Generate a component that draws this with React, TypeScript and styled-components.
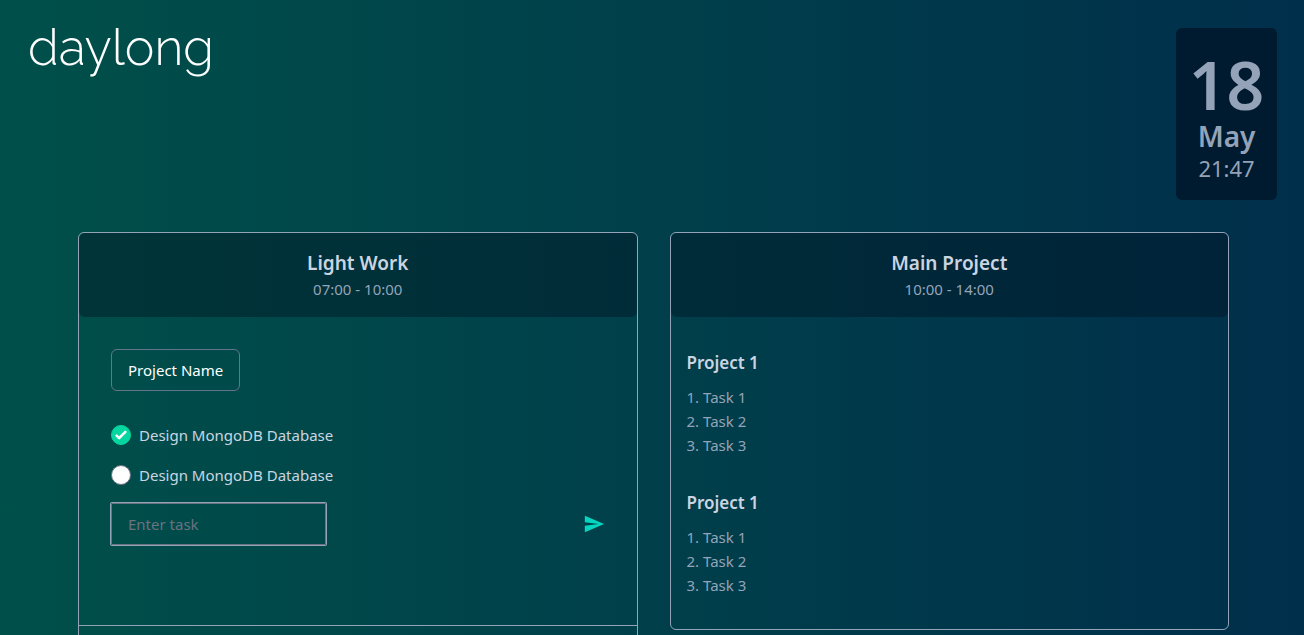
import React from "react";
import styled, { createGlobalStyle } from "styled-components";
import { MdSend } from "react-icons/md";

const GlobalStyle = createGlobalStyle`
  *, *::before, *::after { box-sizing: border-box; }
  body { margin: 0; font-family: "Segoe UI", "Noto Sans", "Open Sans", sans-serif; font-size: 15px; line-height: 24px; }
  h1, h2, h3, p, ol { margin: 0; padding: 0; }
  button, input { font: inherit; }
`;

const Page = styled.div`
  height: 100vh;
  overflow: hidden;
  background: linear-gradient(to right, #00504a, #002f4b);
  color: #94a3b8;
`;

const TopBar = styled.header`
  display: flex;
  justify-content: space-between;
  align-items: flex-start;
  padding: 28px 27px 32px 28px;
`;

const Logo = styled.h1`
  font-family: Raleway, Lato, sans-serif;
  font-weight: 300;
  font-size: 50px;
  line-height: 40px;
  color: #fff;
`;

const DateCard = styled.div`
  min-width: 101px;
  padding: 20px 8px 16px;
  border-radius: 6px;
  background: #001b2f;
  text-align: center;
`;

const Day = styled.div`
  font-size: 66px;
  line-height: 72px;
  font-weight: 600;
`;

const Month = styled.div`
  font-size: 28px;
  line-height: 32px;
  font-weight: 600;
`;

const Clock = styled.time`
  display: block;
  font-size: 22px;
  line-height: 32px;
`;

const Board = styled.main`
  display: grid;
  grid-template-columns: 1fr 1fr;
  align-items: start;
  gap: 32px;
  padding: 0 75px 32px 78px;
`;

const Card = styled.section`
  border: 1px solid #94a3b8;
  border-radius: 6px;
`;

const CardHeader = styled.div`
  padding: 16px;
  border-radius: 6px;
  background: rgba(0, 15, 30, 0.4);
  text-align: center;
`;

const CardTitle = styled.h2`
  font-size: 19px;
  line-height: 28px;
  font-weight: 600;
  color: #cbd5e1;
`;

const TaskPanel = styled.div`
  display: flex;
  flex-direction: column;
  align-items: flex-start;
  gap: 16px;
  padding: 32px 32px 80px;
`;

const NextPanel = styled.div`
  min-height: 96px;
  border-top: 1px solid #94a3b8;
`;

const ProjectButton = styled.button`
  margin-bottom: 16px;
  padding: 8px 16px;
  border: 1px solid #64748b;
  border-radius: 6px;
  background: transparent;
  color: #fff;
`;

const Task = styled.label`
  display: flex;
  align-items: center;
  gap: 8px;
  color: #cbd5e1;
`;

const Check = styled.input`
  appearance: none;
  width: 20px;
  height: 20px;
  margin: 0;
  border: 1px solid #6b7280;
  border-radius: 50%;
  background: #fff;
  &:checked {
    border-color: #06d6a0;
    background: #06d6a0 url("data:image/svg+xml,%3Csvg viewBox='0 0 16 16' fill='white' xmlns='http://www.w3.org/2000/svg'%3E%3Cpath d='M12.207 4.793a1 1 0 010 1.414l-5 5a1 1 0 01-1.414 0l-2-2a1 1 0 011.414-1.414L6.5 9.086l4.293-4.293a1 1 0 011.414 0z'/%3E%3C/svg%3E") center / 20px no-repeat border-box;
  }
`;

const EntryForm = styled.form`
  display: flex;
  justify-content: space-between;
  align-items: center;
  align-self: stretch;
`;

const Entry = styled.input`
  width: 215px;
  height: 42px;
  padding: 8px 16px;
  border: 1px solid #6b7280;
  border-radius: 1px;
  box-shadow: 0 0 0 1px #94a3b8;
  background: transparent;
  color: #cbd5e1;
  outline: none;
  &::placeholder { color: #6b7280; opacity: 1; }
`;

const SendButton = styled.button`
  display: flex;
  padding: 0;
  border: 0;
  background: transparent;
  color: #06d6c0;
`;

const ProjectList = styled.div`
  display: grid;
  gap: 32px;
  padding: 32px 16px;
`;

const ProjectTitle = styled.h3`
  margin-bottom: 8px;
  font-size: 17px;
  line-height: 28px;
  font-weight: 600;
  color: #cbd5e1;
`;

const Steps = styled.ol`
  list-style-position: inside;
`;

const tasks = [
  { id: 1, name: "Design MongoDB Database", done: true },
  { id: 2, name: "Design MongoDB Database", done: false },
];

const projects = [
  { id: 1, name: "Project 1", steps: ["Task 1", "Task 2", "Task 3"] },
  { id: 2, name: "Project 1", steps: ["Task 1", "Task 2", "Task 3"] },
];

export default function App() {
  return (
    <Page>
      <GlobalStyle />
      <TopBar>
        <Logo>daylong</Logo>
        <DateCard>
          <Day>18</Day>
          <Month>May</Month>
          <Clock>21:47</Clock>
        </DateCard>
      </TopBar>
      <Board>
        <Card>
          <CardHeader>
            <CardTitle>Light Work</CardTitle>
            <p>07:00 - 10:00</p>
          </CardHeader>
          <TaskPanel>
            <ProjectButton type="button">Project Name</ProjectButton>
            {tasks.map((task) => (
              <Task key={task.id}>
                <Check type="checkbox" defaultChecked={task.done} />
                {task.name}
              </Task>
            ))}
            <EntryForm onSubmit={(event) => event.preventDefault()}>
              <Entry type="text" placeholder="Enter task" aria-label="Enter task" />
              <SendButton type="submit" aria-label="Add task">
                <MdSend size={22} />
              </SendButton>
            </EntryForm>
          </TaskPanel>
          <NextPanel />
        </Card>
        <Card>
          <CardHeader>
            <CardTitle>Main Project</CardTitle>
            <p>10:00 - 14:00</p>
          </CardHeader>
          <ProjectList>
            {projects.map((project) => (
              <div key={project.id}>
                <ProjectTitle>{project.name}</ProjectTitle>
                <Steps>
                  {project.steps.map((step, index) => (
                    <li key={index}>{step}</li>
                  ))}
                </Steps>
              </div>
            ))}
          </ProjectList>
        </Card>
      </Board>
    </Page>
  );
}
